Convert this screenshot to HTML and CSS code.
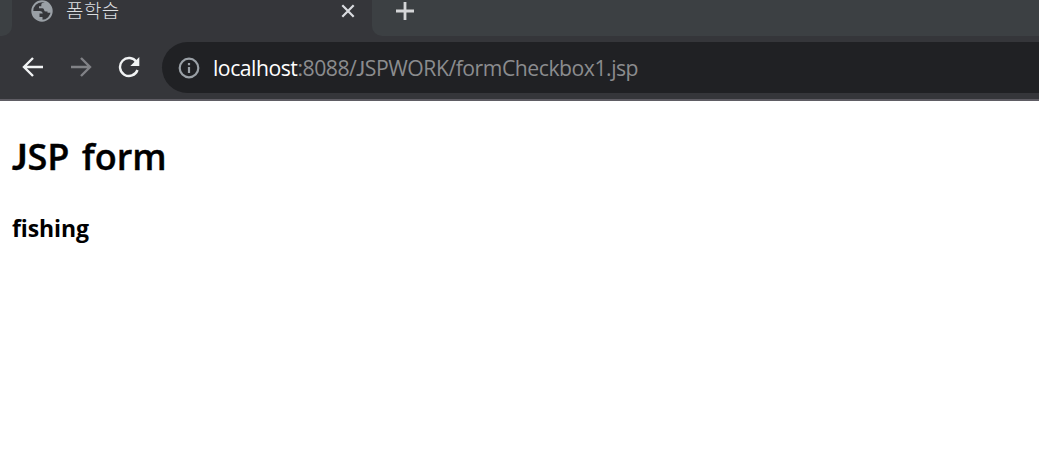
FILE: index.html
```html
<!DOCTYPE html>
<html lang="ko">
<head>
<meta charset="utf-8">
<title>폼학습</title>
<link rel="stylesheet" href="styles.css">
</head>
<body>
<header class="browser">
  <div class="tabs">
    <div class="previous-tab"></div>
    <div class="tab">
      <svg class="globe" viewBox="0 0 22 22"><circle cx="11" cy="11" r="9.7" fill="none" stroke="#9aa0a6" stroke-width="2"/><path d="M1 11h8q2.600.2 2.800 2.600h-3.300v3.400h3V20.500Q1 19.500 1 11zM13.500 1v2h-2q-1.200.2-1.200 1.700v1.500h-2.300v2h3.500q1.500.2 1.600 1.800.2 1.500 1.900 1.500h1.500v1.300h4.500Q22 4 13.500 1z" fill="#9aa0a6"/></svg>
      <span class="tab-title">폼학습</span>
      <svg class="close" viewBox="0 0 14 14"><path d="M1.300 1.300l11.400 11.400M12.700 1.300L1.300 12.700"/></svg>
    </div>
    <div class="new-tab"><svg class="plus" viewBox="0 0 20 20"><path d="M10 1v18M1 10h18"/></svg></div>
  </div>
  <nav class="toolbar">
    <svg class="nav-icon" viewBox="0 0 22 22"><path d="M21 11H2.500M11 2l-9 9 9 9"/></svg>
    <svg class="nav-icon forward" viewBox="0 0 22 22"><path d="M1 11h18.500M11 2l9 9-9 9"/></svg>
    <svg class="nav-icon reload" viewBox="0 0 22 22"><path d="M18.500 6A9 9 0 1 0 19.500 14"/><path class="arrowhead" d="M21.300 1v9h-9z"/></svg>
    <div class="address">
      <svg class="info" viewBox="0 0 22 22"><circle cx="11" cy="11" r="9.300"/><path d="M11 10v6M11 6v2.300"/></svg>
      <div class="url"><span class="host">localhost</span><span class="path">:8088/<span class="cap-j">J</span>SPWORK/formCheckbox1.jsp</span></div>
    </div>
  </nav>
</header>
<main class="page">
  <h2 class="heading"><span class="cap-j">J</span>SP form</h2>
  <p class="result">fishing</p>
</main>
</body>
</html>
```
FILE: styles.css
```css
body {
  margin: 0;
  height: 472px;
  overflow: hidden;
  background: #fff;
  color: #000;
  font-family: "Open Sans", "Noto Sans CJK KR", sans-serif;
}
.browser {
  box-sizing: border-box;
  height: 101px;
  background: #35363a;
  border-bottom: 2px solid #5f5d64;
}
.tabs { display: flex; height: 36px; }
.previous-tab { width: 12px; background: #3c4043; border-radius: 0 0 10px 0; }
.tab { display: flex; width: 360px; }
.globe { width: 22px; height: 22px; margin-left: 19px; }
.tab-title {
  width: 56px;
  margin-left: 13px;
  font: 300 19px/20px "Noto Sans CJK KR", sans-serif;
  letter-spacing: 0.4px;
  color: #dcdee0;
  white-space: nowrap;
}
.close { width: 14px; height: 14px; margin: 4px 0 0 219px; fill: none; stroke: #dadce0; stroke-width: 2.2; }
.new-tab { flex: 1; background: #3c4043; border-radius: 0 0 0 10px; }
.plus { display: block; width: 20px; height: 20px; margin: 1px 0 0 23px; fill: none; stroke: #d5d6d8; stroke-width: 2.8; }
.toolbar { display: flex; align-items: center; height: 63px; padding-left: 22px; }
.nav-icon { flex: none; width: 22px; height: 22px; margin: 0 26px 1px 0; fill: none; stroke: #f1f3f4; stroke-width: 2.4; }
.forward { stroke: #818286; }
.reload { margin-right: 22px; }
.arrowhead { fill: #f1f3f4; stroke: none; }
.address {
  display: flex;
  align-items: center;
  flex: 1;
  height: 51px;
  background: #202124;
  border-radius: 26px 0 0 26px;
}
.info { width: 22px; height: 22px; margin: 1px 0 0 16px; fill: none; stroke: #9aa0a6; stroke-width: 2.2; }
.url { margin-left: 13px; font-size: 21.2px; line-height: 30px; letter-spacing: -0.48px; white-space: nowrap; }
.host { color: #fff; }
.path { color: #8b8c8e; }
.cap-j { font-family: Lato, sans-serif; }
.page { padding-left: 12px; }
.heading {
  margin: 0;
  padding-top: 29px;
  font-size: 36px;
  line-height: 52px;
  font-weight: 600;
  word-spacing: 3px;
  -webkit-text-stroke: 0.4px #000;
}
.heading .cap-j { font-weight: 700; }
.result { margin: 0; padding-top: 27px; font-size: 23px; line-height: 36px; font-weight: 700; letter-spacing: -0.1px; }
```
